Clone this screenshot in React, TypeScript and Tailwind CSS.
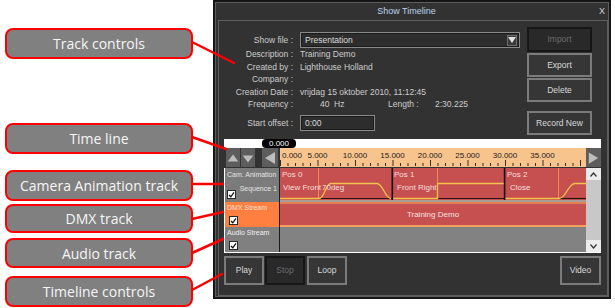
import React from "react";

const UI = "font-['Liberation_Sans',Arial,sans-serif]";

function Callout({ label, className }: { label: string; className: string }) {
  return (
    <div
      className={`flex w-[188px] items-center justify-center rounded-[8px] border-2 border-[#ff0000] bg-[#808080] font-['Open_Sans',sans-serif] text-[14px] text-[#f6f6f6] ${className}`}
    >
      {label}
    </div>
  );
}

function Btn({ children, disabled, className }: { children: React.ReactNode; disabled?: boolean; className: string }) {
  return (
    <div
      className={`flex items-center justify-center border-2 text-[8.5px] ${
        disabled ? "border-[#171717] bg-[#292929] text-[#6c6c6c]" : "border-[#7b7b7b] bg-[#363636] text-[#dadada]"
      } ${className}`}
    >
      {children}
    </div>
  );
}

function Check() {
  return (
    <span className="flex h-[9px] w-[9px] items-center justify-center border border-[#2a2a2a] bg-white">
      <svg width="7" height="7" viewBox="0 0 7 7">
        <path d="M1 4 L2.8 5.8 L6 1.4" stroke="#111" strokeWidth="1.3" fill="none" />
      </svg>
    </span>
  );
}

function Row({ label, children, className }: { label: string; children?: React.ReactNode; className: string }) {
  return (
    <div className={`flex items-center ${className}`}>
      <span className="w-[69px] text-right">{label}</span>
      <div className="ml-[7px] flex items-center">{children}</div>
    </div>
  );
}

function Ruler() {
  const ticks = Array.from({ length: 41 }, (_, i) => i);
  const labels = [5, 10, 15, 20, 25, 30, 35];
  return (
    <div className="relative h-full w-[306px] bg-[#f8c48e] text-[8px] text-[#1a1a1a]">
      <svg className="absolute left-0 top-0" width="306" height="19">
        {ticks.map((i) => {
          const x = i * 7.5 + 0.5;
          const major = i % 5 === 0;
          return <line key={i} x1={x} x2={x} y1={major ? 12 : 15} y2={18} stroke="#3b2b1c" strokeWidth={1} />;
        })}
      </svg>
      <span className="absolute left-[2px] top-[2px]">0.000</span>
      {labels.map((s) => (
        <span key={s} className="absolute top-[2px] -translate-x-1/2" style={{ left: s * 7.5 }}>
          {s}.000
        </span>
      ))}
    </div>
  );
}

function Tri({ dir }: { dir: "up" | "down" | "left" | "right" }) {
  const pts = {
    up: "2,12 8,4 14,12",
    down: "2,5 14,5 8,13",
    left: "3,8 13,2 13,14",
    right: "3,2 13,8 3,14",
  }[dir];
  return (
    <svg width="16" height="16" viewBox="0 0 16 16">
      <polygon points={pts} fill="#bdbdbd" />
    </svg>
  );
}

function CameraLane() {
  return (
    <div className="relative h-[34px] bg-[#c65050] text-[8px] text-[#f6dede]">
      <svg className="absolute left-0 top-0" width="306" height="34">
        <line x1="38.5" x2="38.5" y1="0" y2="31" stroke="#ee8a5c" strokeWidth="1" />
        <line x1="157.5" x2="157.5" y1="0" y2="31" stroke="#ee8a5c" strokeWidth="1" />
        <line x1="278.5" x2="278.5" y1="0" y2="31" stroke="#ee8a5c" strokeWidth="1" />
        <line x1="39" x2="112" y1="30.5" y2="30.5" stroke="#2a1414" strokeWidth="1.2" />
        <line x1="158" x2="224" y1="30.5" y2="30.5" stroke="#2a1414" strokeWidth="1.2" />
        <line x1="280" x2="306" y1="30.5" y2="30.5" stroke="#2a1414" strokeWidth="1.2" />
        <g stroke="#f3c24a" strokeWidth="1.3" fill="none">
          <path d="M0 30.5 L39 30.5 C45 30.5 45 15.5 51 15.5 L97 15.5 C103 15.5 105 30.5 111 30.5" />
          <path d="M113 30.5 L157.5 30.5 L157.5 15.5 L224 15.5" />
          <path d="M225 30.5 L279 30.5 C286 30.5 288 15.5 295 15.5 L306 15.5" />
        </g>
        <rect x="111.5" y="0" width="1.6" height="32" fill="#1c0c0c" />
        <rect x="223.8" y="0" width="1.6" height="32" fill="#1c0c0c" />
        <rect x="0" y="32" width="306" height="2" fill="#a99a96" />
      </svg>
      <div className="relative flex h-full">
        <div className="w-[112px] pl-[2px] pt-[2px]">
          <div className="leading-[10px]">Pos 0</div>
          <div className="mt-[3px] flex pl-[1px] leading-[10px]">
            <span className="w-[39px]">View Front</span>
            <span>70deg</span>
          </div>
        </div>
        <div className="w-[112px] pl-[2px] pt-[2px]">
          <div className="leading-[10px]">Pos 1</div>
          <div className="mt-[3px] pl-[3px] leading-[10px]">Front Right</div>
        </div>
        <div className="flex-1 pl-[3px] pt-[2px]">
          <div className="leading-[10px]">Pos 2</div>
          <div className="mt-[3px] pl-[3px] leading-[10px]">Close</div>
        </div>
      </div>
    </div>
  );
}

function TimelineWindow() {
  return (
    <div className={`${UI} h-[299px] w-[398px] shrink-0 border-2 border-[#151515] bg-[#323232]`}>
      <div className="flex h-full flex-col border border-[#5e5e5e]">
        {/* title bar */}
        <div className="flex h-[17px] shrink-0 items-center text-[9px]">
          <div className="w-[9px]" />
          <div className="flex-1 text-center text-[#bcd3ec]">Show Timeline</div>
          <div className="w-[20px] pr-[3px] text-right text-[#d2d2d2]">X</div>
        </div>

        <div className="ml-[2px] flex w-[390px] flex-1 flex-col border border-[#5e5e5e] pl-[5px] pr-[6px]">
          {/* track controls */}
          <div className="flex h-[118px] shrink-0 text-[8.5px] text-[#cdcdcd]">
            <div className="mt-[11px] w-[296px]">
              <Row label="Show file :" className="h-[16px]">
                <div className="flex h-[16px] w-[220px] items-center justify-between border border-[#8a8a8a] bg-[#2d2d2d] pl-[4px] pr-[2px] shadow-[inset_0_0_0_1px_#1b1b1b]">
                  <span className="text-[#dcdcdc]">Presentation</span>
                  <span className="flex h-[11px] w-[10px] items-center justify-center border border-[#6e6e6e] bg-[#3a3a3a]">
                    <svg width="8" height="6" viewBox="0 0 8 6">
                      <polygon points="0,0 8,0 4,6" fill="#e2e2e2" />
                    </svg>
                  </span>
                </div>
              </Row>
              <Row label="Description :" className="h-[12.6px]">
                <span>Training Demo</span>
              </Row>
              <Row label="Created by :" className="h-[12.6px]">
                <span>Lighthouse Holland</span>
              </Row>
              <Row label="Company :" className="h-[12.6px]" />
              <Row label="Creation Date :" className="h-[12.6px]">
                <span>vrijdag 15 oktober 2010, 11:12:45</span>
              </Row>
              <Row label="Frequency :" className="h-[12.6px]">
                <span className="w-[34px] pl-[20px]">40</span>
                <span className="w-[54px]">Hz</span>
                <span className="w-[47px]">Length :</span>
                <span>2:30.225</span>
              </Row>
              <Row label="Start offset :" className="mt-[4px] h-[16px]">
                <div className="flex h-[16px] w-[75px] items-center border border-[#8a8a8a] bg-[#2d2d2d] pl-[4px] shadow-[inset_0_0_0_1px_#1b1b1b] text-[#dcdcdc]">
                  0:00
                </div>
              </Row>
            </div>
            <div className="ml-[7px] mt-[6px] flex w-[65px] flex-col">
              <Btn disabled className="h-[25px]">Import</Btn>
              <Btn className="mt-[1px] h-[24px]">Export</Btn>
              <Btn className="mt-[1px] h-[24px]">Delete</Btn>
              <Btn className="mt-[9px] h-[24px]">Record New</Btn>
            </div>
          </div>

          {/* time line */}
          <div className="relative h-[9px] shrink-0 bg-white">
            <span className="absolute left-[38px] top-0 flex h-[9px] w-[34px] items-center justify-center rounded-[4px] bg-black text-[8px] text-white">
              0.000
            </span>
          </div>
          <div className="flex h-[20px] shrink-0 items-start">
            <div className="flex h-[19px] w-[56px] pl-[2px]">
              <div className="flex w-[14px] items-center justify-center bg-[#5d5d5d]">
                <Tri dir="up" />
              </div>
              <div className="ml-[1px] flex w-[14px] items-center justify-center bg-[#5d5d5d]">
                <Tri dir="down" />
              </div>
              <div className="w-[7px]" />
              <div className="flex w-[16px] items-center justify-center bg-[#5d5d5d]">
                <Tri dir="left" />
              </div>
            </div>
            <div className="h-[19px]">
              <Ruler />
            </div>
            <div className="flex h-[19px] w-[15px] items-center justify-center bg-[#5d5d5d]">
              <Tri dir="right" />
            </div>
          </div>

          {/* tracks */}
          <div className="flex h-[85px] shrink-0 border-b border-l border-white text-[7px] whitespace-nowrap">
            <div className="flex w-[54px] flex-col overflow-hidden">
              <div className="flex h-[34px] flex-col bg-[#7b7b7b] pl-[2px] pr-[2px] text-[#e4e4e4]">
                <span className="mt-[2px] leading-[10px]">Cam. Animation</span>
                <div className="flex flex-1 items-end justify-between pb-[2px]">
                  <span className="mb-[1px]"><Check /></span>
                  <span className="mb-[6px] leading-[10px]">Sequence 1</span>
                </div>
              </div>
              <div className="flex h-[25px] flex-col justify-between bg-[#ff7f40] pb-[2px] pl-[2px] text-[#ffe2d2]">
                <span className="mt-[1px] leading-[10px]">DMX Stream</span>
                <span className="ml-[2px]"><Check /></span>
              </div>
              <div className="flex h-[25px] flex-col justify-between bg-[#808080] pb-[2px] pl-[2px] text-[#efefef]">
                <span className="mt-[1px] leading-[10px]">Audio Stream</span>
                <span className="ml-[2px]"><Check /></span>
              </div>
            </div>
            <div className="w-[1px] bg-[#1c1c1c]" />
            <div className="flex w-[306px] flex-col">
              <CameraLane />
              <div className="flex h-[25px] items-center justify-center border-b-2 border-t-2 border-b-[#f2a060] border-t-[#e2805c] bg-[#c65050] text-[8px] text-[#f6e0e0]">
                Training Demo
              </div>
              <div className="h-[25px] bg-[#828282]" />
            </div>
            <div className="flex w-[15px] flex-col bg-[#c8c8c8]">
              <div className="flex h-[12px] items-center justify-center bg-[#ececec]">
                <svg width="7" height="5" viewBox="0 0 7 5">
                  <path d="M0.5 4.5 L3.5 1 L6.5 4.5" stroke="#333" strokeWidth="1.2" fill="none" />
                </svg>
              </div>
              <div className="flex-1" />
              <div className="flex h-[12px] items-center justify-center bg-[#ececec]">
                <svg width="7" height="5" viewBox="0 0 7 5">
                  <path d="M0.5 0.5 L3.5 4 L6.5 0.5" stroke="#333" strokeWidth="1.2" fill="none" />
                </svg>
              </div>
            </div>
          </div>

          {/* timeline controls */}
          <div className="mt-[3px] flex h-[29px] shrink-0">
            <Btn className="w-[40px]">Play</Btn>
            <Btn disabled className="ml-[1px] w-[40px]">Stop</Btn>
            <Btn className="ml-[2px] w-[40px]">Loop</Btn>
            <Btn className="ml-auto w-[41px]">Video</Btn>
          </div>
        </div>
      </div>
    </div>
  );
}

export default function App() {
  return (
    <div className="relative flex h-[308px] w-[615px] overflow-hidden bg-white">
      <div className="flex w-[213px] shrink-0 flex-col pl-[5px]">
        <Callout className="mt-[28px] h-[31px]" label="Track controls" />
        <Callout className="mt-[64px] h-[31px]" label="Time line" />
        <Callout className="mt-[16px] h-[31px]" label="Camera Animation track" />
        <Callout className="mt-[3px] h-[29px]" label="DMX track" />
        <Callout className="mt-[5px] h-[30px]" label="Audio track" />
        <Callout className="mt-[8px] h-[31px]" label="Timeline controls" />
      </div>
      <TimelineWindow />
      <svg className="pointer-events-none absolute left-0 top-0" width="615" height="308">
        <g stroke="#ff0000" strokeWidth="2.5" strokeLinecap="round">
          <line x1="192" y1="42" x2="234" y2="63" />
          <line x1="192" y1="137" x2="226" y2="149" />
          <line x1="192" y1="184" x2="223" y2="184" />
          <line x1="192" y1="219" x2="223" y2="212" />
          <line x1="192" y1="253" x2="223" y2="239" />
          <line x1="192" y1="290" x2="222" y2="274" />
        </g>
      </svg>
    </div>
  );
}
